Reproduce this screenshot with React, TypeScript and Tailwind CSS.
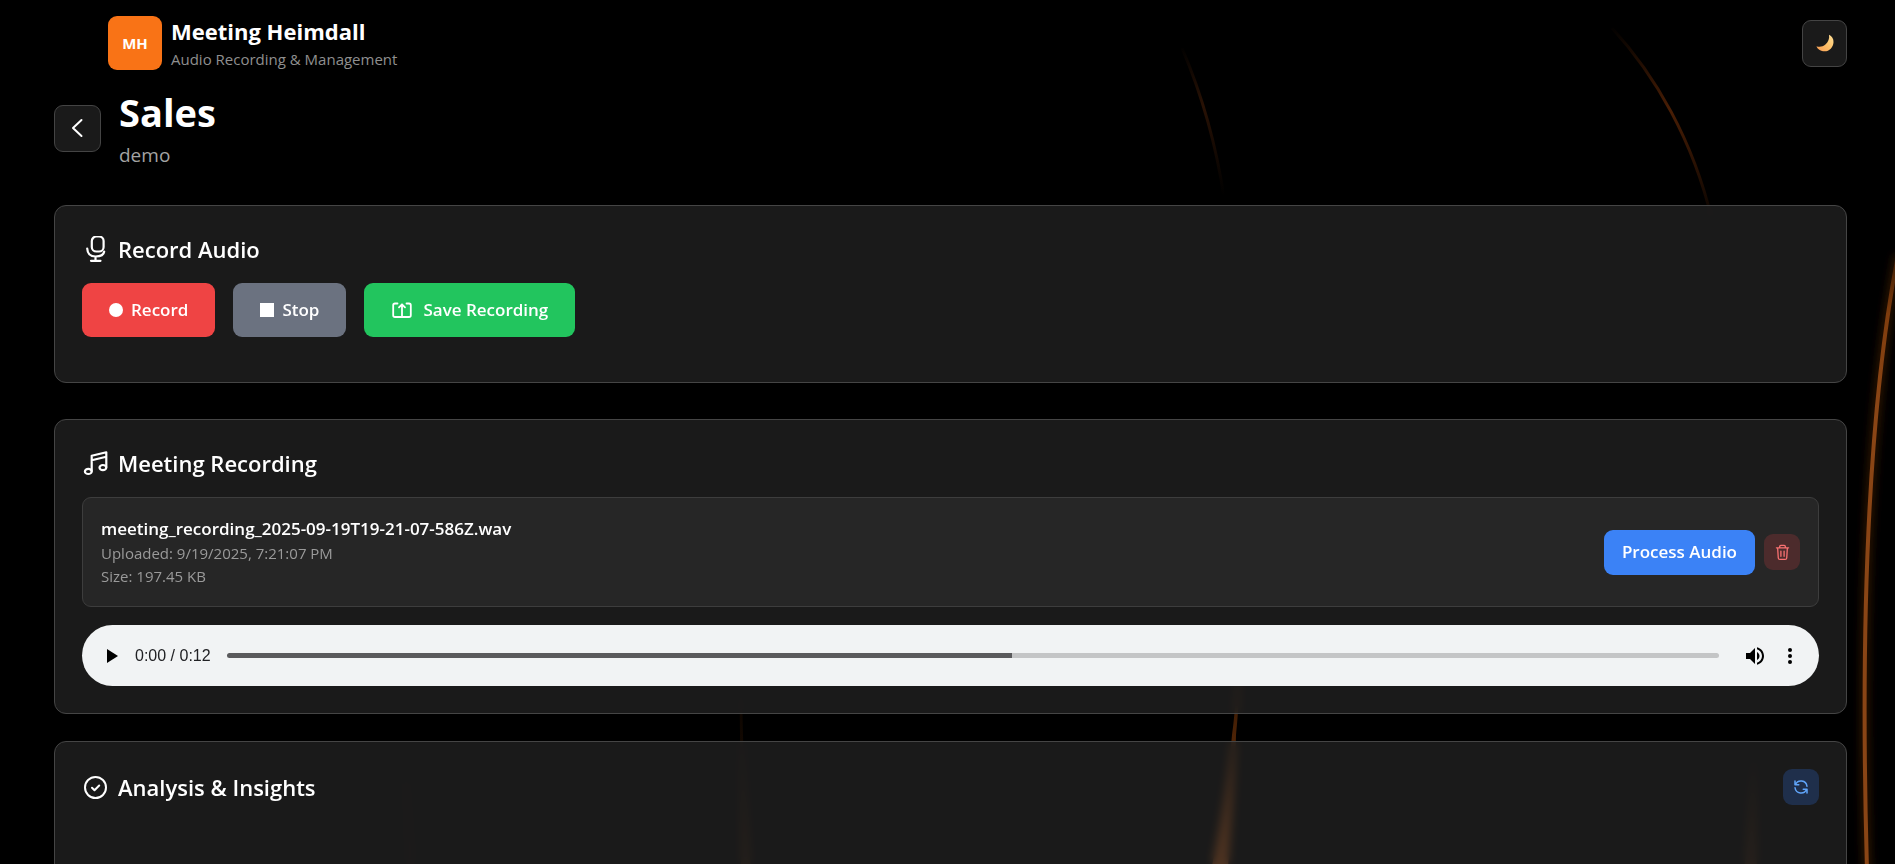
type IconProps = { className?: string };

function MicIcon({ className }: IconProps) {
  return (
    <svg viewBox="0 0 27 27" fill="none" stroke="currentColor" strokeWidth="2.200" strokeLinecap="round" className={className} aria-hidden="true">
      <rect x="9.800" y="0.500" width="11.800" height="15" rx="4.600" />
      <path d="M5.200 12.500c.3 5.500 3.300 8 8.300 8s8.300-2 8.700-5M13.500 20.500v4M9 24.800h9.500" />
    </svg>
  );
}

function MusicIcon({ className }: IconProps) {
  return (
    <svg viewBox="0 0 27 27" fill="none" stroke="currentColor" strokeWidth="2.200" strokeLinecap="round" strokeLinejoin="round" className={className} aria-hidden="true">
      <path d="M9.700 21V5.800L24.300 2.300V17M9.700 10.200L24.300 6.700" />
      <ellipse cx="6.300" cy="21.400" rx="3.400" ry="2.600" />
      <ellipse cx="20.900" cy="17.600" rx="3.400" ry="2.600" />
    </svg>
  );
}

function SaveIcon({ className }: IconProps) {
  return (
    <svg viewBox="-1 0 22 18" fill="none" stroke="currentColor" strokeWidth="1.800" strokeLinecap="round" strokeLinejoin="round" className={className} aria-hidden="true">
      <path d="M5.500 2.500H3A1.800 1.800 0 0 0 1.200 4.300v9.900A1.800 1.800 0 0 0 3 16h14a1.800 1.800 0 0 0 1.800-1.800V4.300A1.800 1.800 0 0 0 17 2.500h-2.500M10 15.500V3.500M7 6.300l3-3 3 3" />
    </svg>
  );
}

function CheckIcon({ className }: IconProps) {
  return (
    <svg viewBox="0 0 27 27" fill="none" stroke="currentColor" strokeWidth="2" strokeLinecap="round" strokeLinejoin="round" className={className} aria-hidden="true">
      <circle cx="13.500" cy="13.500" r="10.500" />
      <path d="M10 13.700l2.500 2.500 4.700-4.700" />
    </svg>
  );
}

function TrashIcon({ className }: IconProps) {
  return (
    <svg viewBox="0 0 16 18" fill="none" stroke="currentColor" strokeWidth="1.400" strokeLinecap="round" strokeLinejoin="round" className={className} aria-hidden="true">
      <path d="M1.500 4h13M5 4V2.500A1.200 1.200 0 0 1 6.200 1.300h3.600A1.200 1.200 0 0 1 11 2.500V4M2.800 4l.7 10.800A1.700 1.700 0 0 0 5.200 16.400h5.600a1.700 1.700 0 0 0 1.700-1.600L13.200 4M6.300 7.500v5.500M9.700 7.500v5.500" />
    </svg>
  );
}

function RefreshIcon({ className }: IconProps) {
  return (
    <svg viewBox="0 0 24 24" fill="none" stroke="currentColor" strokeWidth="2" strokeLinecap="round" strokeLinejoin="round" className={className} aria-hidden="true">
      <path d="M4 4v5h.582m15.356 2A8.001 8.001 0 0 0 4.582 9m0 0H9m11 11v-5h-.581m0 0a8.003 8.003 0 0 1-15.357-2m15.357 2H15" />
    </svg>
  );
}

function Moon({ className }: IconProps) {
  return (
    <svg viewBox="0 0 18 18" className={className} aria-hidden="true">
      <defs>
        <linearGradient id="moon" x1="0" y1="1" x2="1" y2="0">
          <stop offset="0" stopColor="#f79a52" />
          <stop offset="0.500" stopColor="#fdc068" />
          <stop offset="1" stopColor="#ffe29a" />
        </linearGradient>
      </defs>
      <path d="M13 .8C15.900 2.200 17.700 4.800 17.500 8.200 17.300 13.200 13.400 17.300 8.600 17.300 5 17.300 1.700 15.400.5 12.200c2.500 1 6.200.8 8.900-1.600C12.300 8 13.700 4.500 13 .8z" fill="url(#moon)" />
    </svg>
  );
}

function Backdrop() {
  return (
    <svg viewBox="0 0 1895 864" preserveAspectRatio="none" className="pointer-events-none absolute inset-x-0 top-0 h-screen w-full" fill="none" aria-hidden="true">
      <defs>
        <linearGradient id="arcA" gradientUnits="userSpaceOnUse" x1="0" y1="25" x2="0" y2="235">
          <stop offset="0" stopColor="#7a3208" stopOpacity="0" />
          <stop offset="0.400" stopColor="#7a3208" stopOpacity="0.600" />
          <stop offset="1" stopColor="#7a3208" stopOpacity="0" />
        </linearGradient>
        <linearGradient id="arcB" gradientUnits="userSpaceOnUse" x1="0" y1="45" x2="0" y2="195">
          <stop offset="0" stopColor="#4a2008" stopOpacity="0" />
          <stop offset="0.400" stopColor="#4a2008" stopOpacity="0.550" />
          <stop offset="1" stopColor="#4a2008" stopOpacity="0" />
        </linearGradient>
        <linearGradient id="arcC" gradientUnits="userSpaceOnUse" x1="0" y1="610" x2="0" y2="864">
          <stop offset="0" stopColor="#a84c0c" stopOpacity="0" />
          <stop offset="0.450" stopColor="#a84c0c" stopOpacity="0.420" />
          <stop offset="1" stopColor="#a85218" stopOpacity="0.800" />
        </linearGradient>
        <linearGradient id="arcD" gradientUnits="userSpaceOnUse" x1="0" y1="230" x2="0" y2="400">
          <stop offset="0" stopColor="#8a420f" stopOpacity="0" />
          <stop offset="0.500" stopColor="#8a420f" stopOpacity="0.900" />
          <stop offset="1" stopColor="#8a4515" />
        </linearGradient>
        <filter id="glow" x="-50%" y="-10%" width="200%" height="120%">
          <feGaussianBlur stdDeviation="4" />
        </filter>
      </defs>
      <path d="M1612 28C1655 75 1693 140 1712 220" stroke="url(#arcA)" strokeWidth="3" />
      <path d="M1182 48C1202 95 1217 150 1224 198" stroke="url(#arcB)" strokeWidth="3" />
      <path d="M1898 255C1864 430 1861 660 1867 870" stroke="#7a3808" strokeWidth="8" strokeOpacity="0.400" filter="url(#glow)" />
      <path d="M1898 255C1864 430 1861 660 1867 870" stroke="url(#arcD)" strokeWidth="4" />
      <path d="M1236 620C1238 660 1236 710 1232 735C1229 770 1222 820 1209 880L1227 880C1231 830 1235 780 1236 735C1239 710 1241 660 1240 620Z" fill="url(#arcC)" />
      <path d="M739 650L740 735L741 870L751 870C748 820 744 770 743 735L741 650Z" fill="url(#arcC)" fillOpacity="0.220" />
      <path d="M1754 750L1744 870L1757 870Z" fill="url(#arcC)" fillOpacity="0.250" />
      <path d="M406 780L411 870" stroke="url(#arcC)" strokeWidth="8" strokeOpacity="0.060" />
    </svg>
  );
}

const panel = "rounded-xl border border-[#454545] bg-[#2c2c2c]/60 px-[27px] backdrop-blur-[5px]";
const heading = "flex items-center gap-[9px] text-[22px] leading-8 font-semibold";
const action = "flex h-[54px] items-center rounded-[9px] px-[27px] text-[17px] font-semibold";

export default function App() {
  return (
    <div className="relative min-h-screen overflow-hidden bg-black font-['Open_Sans','Noto_Sans',sans-serif] text-white">
      <Backdrop />
      <div className="relative px-[54px] pr-12 pt-4">
        <header className="flex items-center justify-between pl-[54px]">
          <div className="flex items-center gap-[9px]">
            <div className="flex size-[54px] items-center justify-center rounded-[9px] bg-[#f97316] text-[15px] font-bold">MH</div>
            <div>
              <p className="text-[22px] leading-[30px] font-bold">Meeting Heimdall</p>
              <p className="mt-0.5 text-[15px] leading-[22px] text-[#8f8f8f]">Audio Recording &amp; Management</p>
            </div>
          </div>
          <button type="button" aria-label="Toggle theme" className="flex h-[47px] w-[45px] items-center justify-center rounded-[9px] border border-[#444] bg-[#1a1a1a]">
            <Moon className="size-[18px]" />
          </button>
        </header>

        <div className="mt-[17px] flex items-center gap-[18px]">
          <button type="button" aria-label="Back" className="flex size-[47px] items-center justify-center rounded-[9px] border border-[#444] bg-[#1a1a1a]">
            <svg viewBox="0 0 14 20" fill="none" stroke="currentColor" strokeWidth="2" strokeLinecap="round" strokeLinejoin="round" className="h-5 w-[14px]" aria-hidden="true">
              <path d="M10.500 2L2 10l8.500 8" />
            </svg>
          </button>
          <div>
            <h1 className="text-[38px] leading-[50px] font-bold">Sales</h1>
            <p className="mt-1 text-[19px] leading-7 text-[#a3a3a3]">demo</p>
          </div>
        </div>

        <main className="mt-9">
          <section className={`${panel} pt-[27px] pb-[45px]`}>
            <h2 className={heading}>
              <MicIcon className="size-[27px]" />
              Record Audio
            </h2>
            <div className="mt-[18px] flex gap-[18px]">
              <button type="button" className={`${action} gap-2 bg-[#ef4444]`}>
                <span className="size-[14px] rounded-full bg-white" />
                Record
              </button>
              <button type="button" className={`${action} gap-2 bg-[#6b7280]`}>
                <span className="size-[14px] bg-white" />
                Stop
              </button>
              <button type="button" className={`${action} gap-[10px] bg-[#22c55e]`}>
                <SaveIcon className="h-[18px] w-[22px]" />
                Save Recording
              </button>
            </div>
          </section>

          <section className={`${panel} mt-9 py-[27px]`}>
            <h2 className={heading}>
              <MusicIcon className="size-[27px]" />
              Meeting Recording
            </h2>
            <div className="mt-[18px] flex items-center justify-between rounded-[9px] border border-[#3d3d3d] bg-[#262626] px-[18px] py-[18px]">
              <div>
                <p className="text-[17px] leading-[26px] font-semibold">meeting_recording_2025-09-19T19-21-07-586Z.wav</p>
                <p className="text-[15px] leading-[23px] text-[#9a9a9a]">Uploaded: 9/19/2025, 7:21:07 PM</p>
                <p className="text-[15px] leading-[23px] text-[#9a9a9a]">Size: 197.45 KB</p>
              </div>
              <div className="flex items-center gap-[9px]">
                <button type="button" className="h-[45px] rounded-[9px] bg-[#3b82f6] px-[18px] text-[17px] font-semibold">Process Audio</button>
                <button type="button" aria-label="Delete recording" className="flex size-9 items-center justify-center rounded-[9px] bg-[#4c2b2c] text-[#f87171]">
                  <TrashIcon className="h-[17px] w-[15px]" />
                </button>
              </div>
            </div>

            <div className="mt-[18px] flex h-[61px] items-center rounded-full bg-[#f1f3f4] pr-[23px] pl-[25px] text-black">
              <button type="button" aria-label="Play">
                <svg viewBox="0 0 11 14" className="h-[14px] w-[11px]" aria-hidden="true">
                  <path d="M0 0l11 7-11 7z" />
                </svg>
              </button>
              <span className="ml-[17px] font-['Liberation_Sans',sans-serif] text-[16px] text-[#202124]">0:00 / 0:12</span>
              <input
                type="range"
                aria-label="Seek"
                min={0}
                max={100}
                defaultValue={53}
                className="ml-4 h-[5px] min-w-0 flex-1 appearance-none rounded-full bg-[linear-gradient(to_right,#5a5a5c_52.6%,#c4c5c6_52.6%)] [&::-webkit-slider-thumb]:appearance-none"
              />
              <button type="button" aria-label="Mute" className="ml-[27px]">
                <svg viewBox="3 3 18 18" className="size-[18px]" aria-hidden="true">
                  <path d="M3 9v6h4l5 5V4L7 9H3zm13.500 3c0-1.770-1.020-3.290-2.500-4.030v8.050c1.480-.730 2.500-2.250 2.500-4.020zM14 3.230v2.060c2.890.860 5 3.540 5 6.710s-2.110 5.850-5 6.710v2.060c4.010-.910 7-4.490 7-8.770s-2.990-7.860-7-8.770z" />
                </svg>
              </button>
              <button type="button" aria-label="More options" className="ml-5">
                <svg viewBox="0 0 12 18" className="h-[18px] w-3" aria-hidden="true">
                  <circle cx="6" cy="3" r="2" />
                  <circle cx="6" cy="9" r="2" />
                  <circle cx="6" cy="15" r="2" />
                </svg>
              </button>
            </div>
          </section>

          <section className={`${panel} mt-[27px] min-h-[180px] py-[27px]`}>
            <div className="flex items-center justify-between">
              <h2 className={heading}>
                <CheckIcon className="size-[27px]" />
                Analysis &amp; Insights
              </h2>
              <button type="button" aria-label="Refresh analysis" className="flex size-9 items-center justify-center rounded-[9px] bg-[#1f2f4b] text-[#60a5fa]">
                <RefreshIcon className="size-[18px]" />
              </button>
            </div>
          </section>
        </main>
      </div>
    </div>
  );
}
